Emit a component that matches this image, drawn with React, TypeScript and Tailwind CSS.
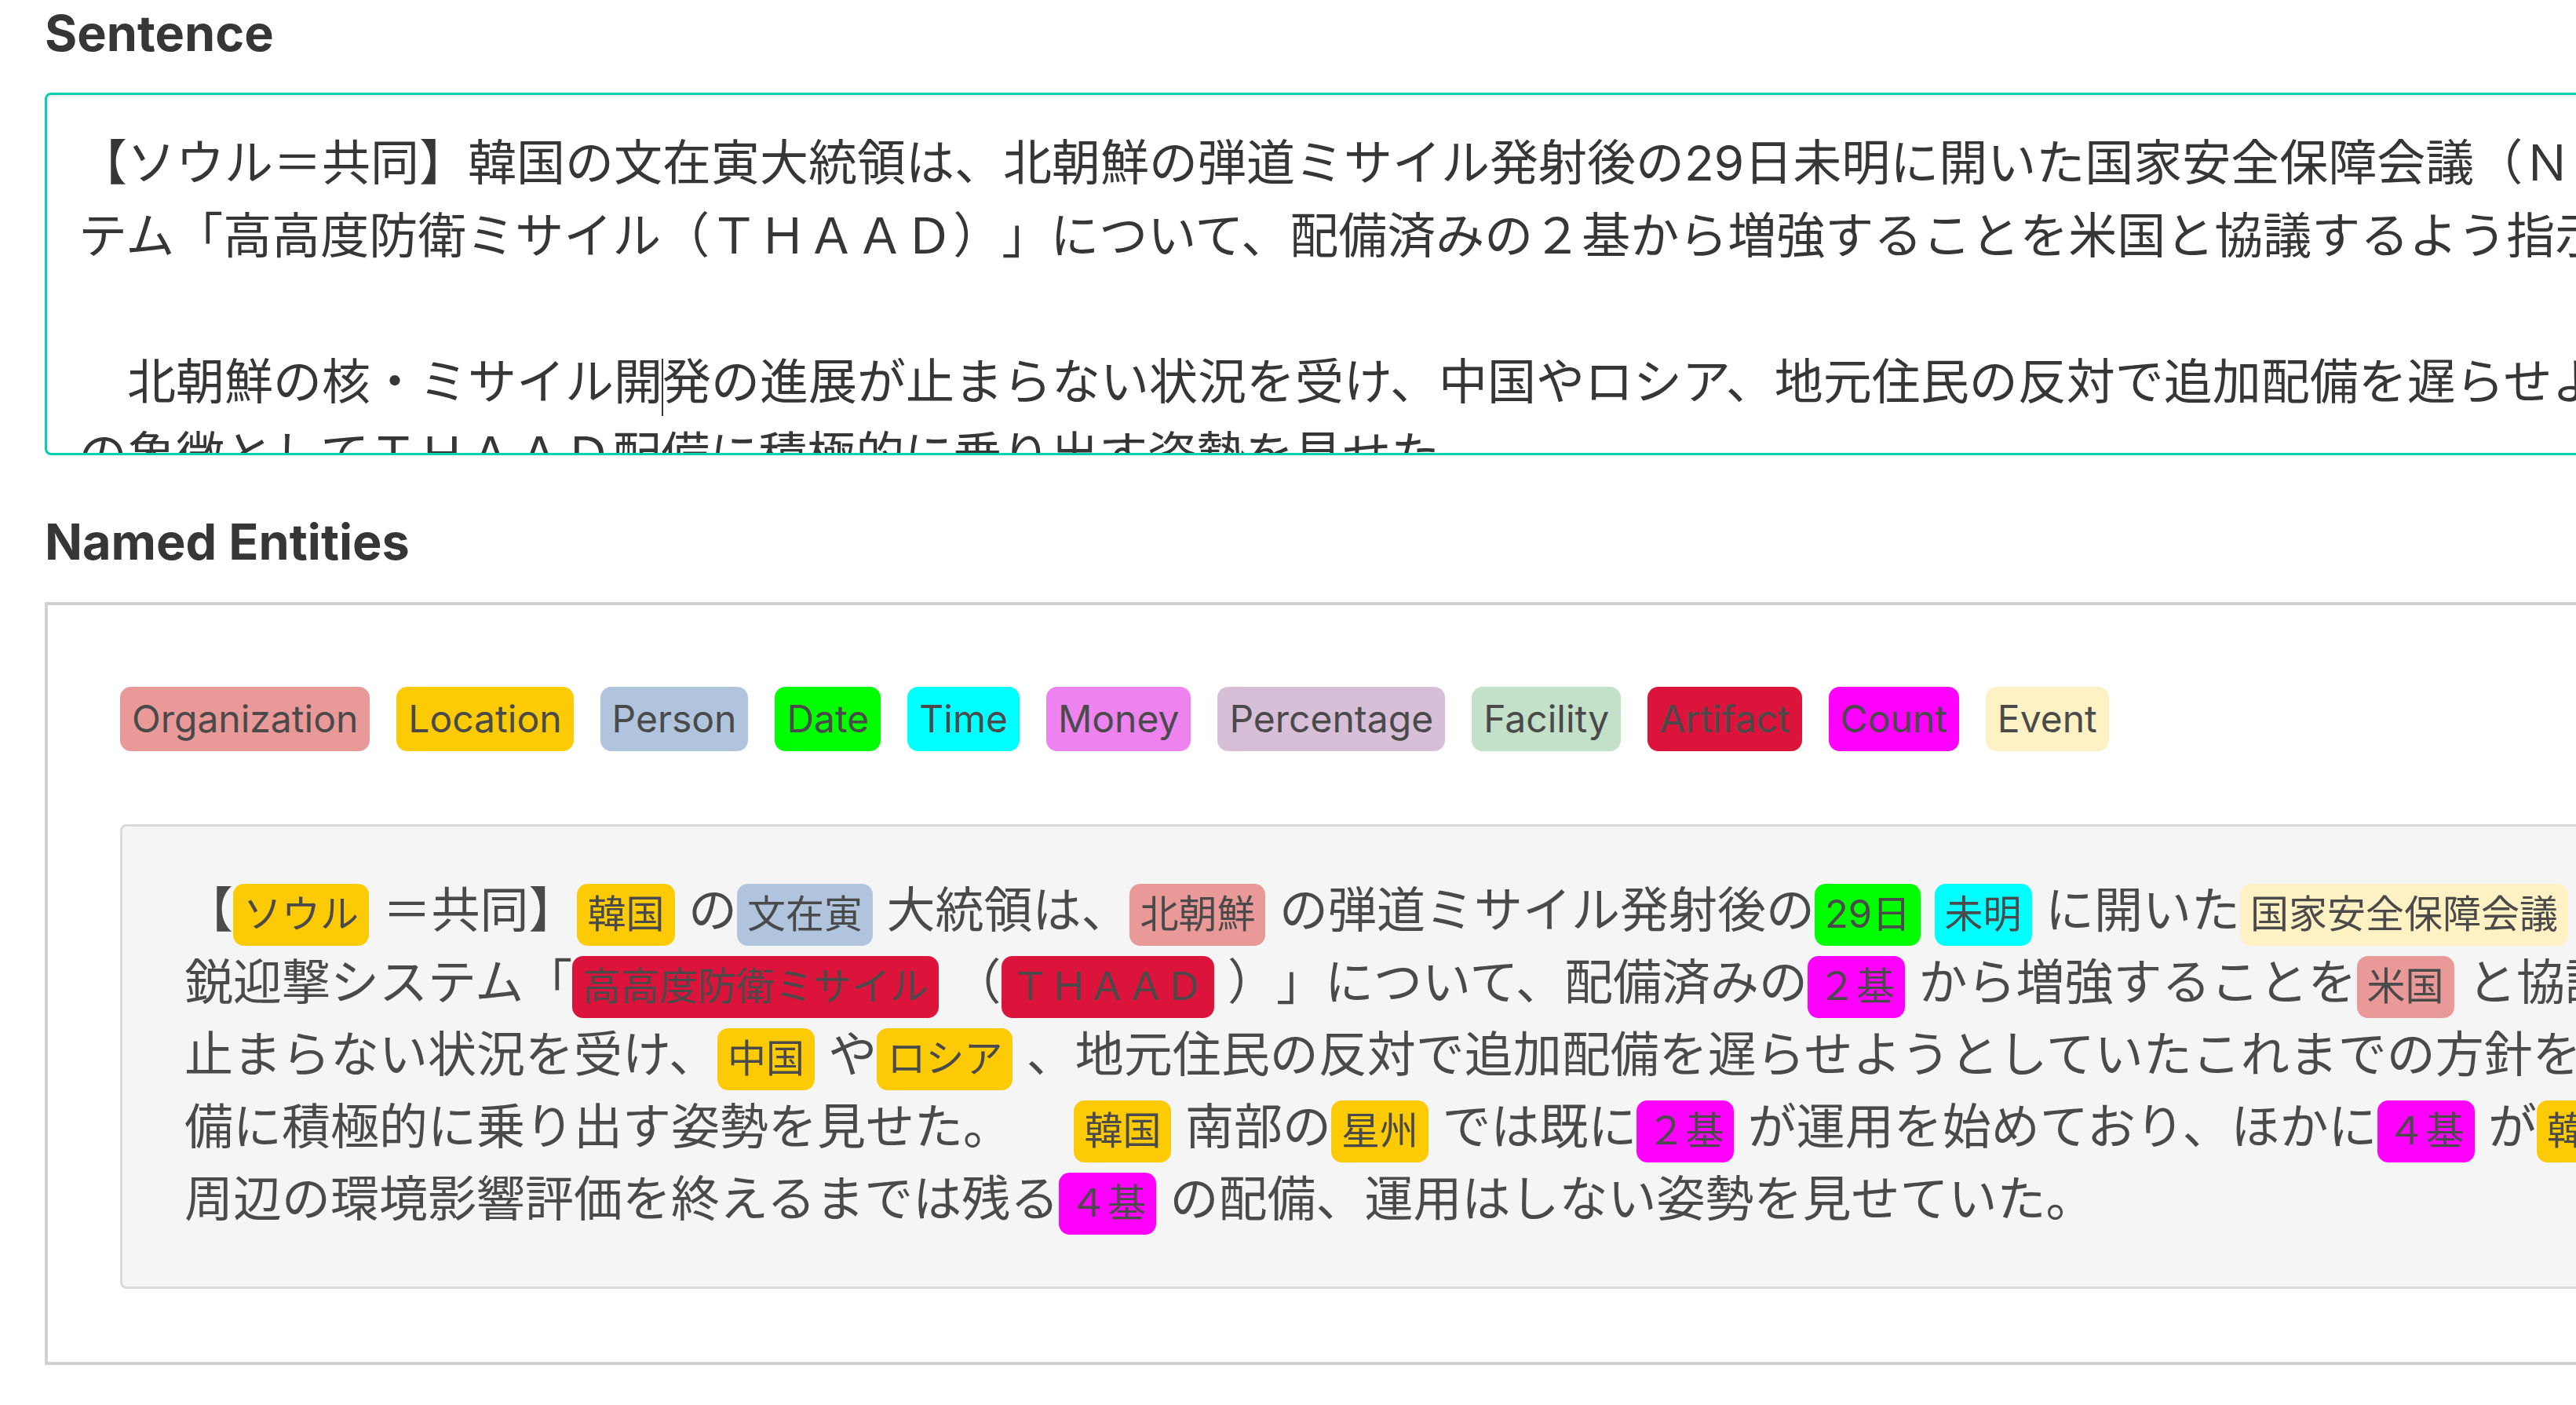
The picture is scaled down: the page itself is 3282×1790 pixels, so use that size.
import React from "react";

type Kind =
  | "org"
  | "loc"
  | "per"
  | "date"
  | "time"
  | "money"
  | "pct"
  | "fac"
  | "art"
  | "cnt"
  | "evt";

const kinds: { key: Kind; label: string; bg: string }[] = [
  { key: "org", label: "Organization", bg: "bg-[#ea9999]" },
  { key: "loc", label: "Location", bg: "bg-[#fccb05]" },
  { key: "per", label: "Person", bg: "bg-[#b0c4de]" },
  { key: "date", label: "Date", bg: "bg-[#00ff00]" },
  { key: "time", label: "Time", bg: "bg-[#00ffff]" },
  { key: "money", label: "Money", bg: "bg-[#ee82ee]" },
  { key: "pct", label: "Percentage", bg: "bg-[#d8bfd8]" },
  { key: "fac", label: "Facility", bg: "bg-[#c3e0c8]" },
  { key: "art", label: "Artifact", bg: "bg-[#dc143c]" },
  { key: "cnt", label: "Count", bg: "bg-[#ff00ff]" },
  { key: "evt", label: "Event", bg: "bg-[#fef1c4]" },
];

const bgOf = (k: Kind) => kinds.find((x) => x.key === k)!.bg;

type Seg = string | [string, Kind];

const sentence = [
  "【ソウル＝共同】韓国の文在寅大統領は、北朝鮮の弾道ミサイル発射後の29日未明に開いた国家安全保障会議（ＮＳＣ）で、韓国に配備されている米軍の最新鋭迎撃シス",
  "テム「高高度防衛ミサイル（ＴＨＡＡＤ）」について、配備済みの２基から増強することを米国と協議するよう指示した。",
  "",
  "　北朝鮮の核・ミサイル開発の進展が止まらない状況を受け、中国やロシア、地元住民の反対で追加配備を遅らせようとしていたこれまでの方針を転換し、米韓同盟強化",
  "の象徴としてＴＨＡＡＤ配備に積極的に乗り出す姿勢を見せた。",
  "",
  "　韓国南部の星州では既に２基が運用を始めており、ほかに４基が韓国内の米軍基地に保管されている。",
].join("\n");

const lines: Seg[][] = [
  [
    "【",
    ["ソウル", "loc"],
    "＝共同】",
    ["韓国", "loc"],
    "の",
    ["文在寅", "per"],
    "大統領は、",
    ["北朝鮮", "org"],
    "の弾道ミサイル発射後の",
    ["29日", "date"],
    ["未明", "time"],
    "に開いた",
    ["国家安全保障会議", "evt"],
    "（ＮＳＣ）で、",
    ["韓国", "loc"],
    "に配備されている",
    ["米軍", "org"],
    "の最新",
  ],
  [
    "鋭迎撃システム「",
    ["高高度防衛ミサイル", "art"],
    "（",
    ["ＴＨＡＡＤ", "art"],
    "）」について、配備済みの",
    ["２基", "cnt"],
    "から増強することを",
    ["米国", "org"],
    "と協議するよう指示した。 　",
    ["北朝鮮", "org"],
    "の核・ミサイル開発の進展が",
  ],
  [
    "止まらない状況を受け、",
    ["中国", "loc"],
    "や",
    ["ロシア", "loc"],
    "、地元住民の反対で追加配備を遅らせようとしていたこれまでの方針を転換し、米韓同盟強化の象徴として",
    ["ＴＨＡＡＤ", "art"],
    "配",
  ],
  [
    "備に積極的に乗り出す姿勢を見せた。 　",
    ["韓国", "loc"],
    "南部の",
    ["星州", "loc"],
    "では既に",
    ["２基", "cnt"],
    "が運用を始めており、ほかに",
    ["４基", "cnt"],
    "が",
    ["韓国", "loc"],
    "内の",
    ["米軍", "org"],
    "基地に保管されている。",
  ],
  [
    "周辺の環境影響評価を終えるまでは残る",
    ["４基", "cnt"],
    "の配備、運用はしない姿勢を見せていた。",
  ],
];

const Mark: React.FC<{ text: string; kind: Kind }> = ({ text, kind }) => (
  <>
    <span
      className={`inline-block ${bgOf(kind)} rounded-[14px] px-[13px] pt-[9px] pb-[11px] text-[49px] leading-[59px]`}
    >
      {text}
    </span>{" "}
  </>
);

const App: React.FC = () => {
  return (
    <div className="w-full h-screen overflow-hidden bg-white font-['Inter','Noto_Sans_CJK_JP',sans-serif] [text-spacing-trim:space-all]">
      <div className="w-[3700px] pl-[57px]">
        <div className="text-[63px] leading-[85px] font-bold text-[#363636] mb-[33px]">
          Sentence
        </div>
        <div className="relative">
          <textarea
            readOnly
            wrap="off"
            value={sentence}
            className="block w-full h-[462px] resize-none overflow-hidden whitespace-pre border-[3px] border-[#00d1b2] rounded-[8px] px-[40px] pt-[40px] text-[62px] leading-[93px] text-[#363636] shadow-[inset_0_2px_4px_rgba(10,10,10,0.1)] outline-none [text-spacing-trim:space-all]"
          />
          <span className="absolute left-[786px] top-[339px] w-[2px] h-[73px] bg-[#363636]" />
        </div>

        <div className="mt-[68px] text-[63px] leading-[85px] font-bold text-[#363636]">
          Named Entities
        </div>

        <div className="mt-[34px] border-[4px] border-[#d1d1d1] px-[92px] pt-[104px] pb-[93px]">
          <div className="flex gap-[34px] text-[#4a4a4a]">
            {kinds.map((k) => (
              <span
                key={k.key}
                className={`${k.bg} h-[82px] leading-[82px] px-[15px] rounded-[14px] text-[48px]`}
              >
                {k.label}
              </span>
            ))}
          </div>

          <div className="mt-[93px] border-[3px] border-[#dbdbdb] rounded-[8px] bg-[#f5f5f5] pl-[79px] pt-[61px] pb-[65px] text-[62px] leading-[92px] text-[#4a4a4a] whitespace-nowrap">
            {lines.map((line, i) => (
              <div key={i}>
                {line.map((seg, j) =>
                  typeof seg === "string" ? (
                    <React.Fragment key={j}>{seg}</React.Fragment>
                  ) : (
                    <Mark key={j} text={seg[0]} kind={seg[1]} />
                  )
                )}
              </div>
            ))}
          </div>
        </div>
      </div>
    </div>
  );
};

export default App;
